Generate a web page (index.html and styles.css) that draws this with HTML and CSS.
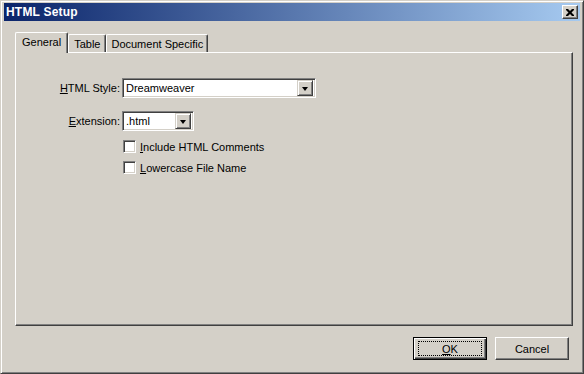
FILE: index.html
```html
<!DOCTYPE html>
<html lang="en">
<head>
    <meta charset="UTF-8">
    <title>HTML Setup</title>
    <link rel="stylesheet" href="styles.css">
</head>
<body>
    <div class="window">
        <div class="titlebar">
            <span class="title">HTML Setup</span>
            <span class="close-btn">
                <svg width="8" height="7" viewBox="0 0 8 7">
                    <path d="M0 0h2l2 2 2-2h2v1l-2.5 2.5L8 6v1H6L4 5 2 7H0V6l2.5-2.5L0 1z" fill="#000"/>
                </svg>
            </span>
        </div>

        <div class="tabs">
            <div class="tab active">General</div>
            <div class="tab">Table</div>
            <div class="tab tab-wide">Document Specific</div>
        </div>

        <div class="panel">
            <div class="form">
                <label class="label"><u>H</u>TML Style:</label>
                <div class="select select-style">
                    <span class="select-text">Dreamweaver</span>
                    <span class="arrow-btn"><span class="arrow"></span></span>
                </div>

                <label class="label"><u>E</u>xtension:</label>
                <div class="select select-ext">
                    <span class="select-text">.html</span>
                    <span class="arrow-btn"><span class="arrow"></span></span>
                </div>

                <span></span>
                <div class="checks">
                    <div class="check-row"><span class="checkbox"></span><span><u>I</u>nclude HTML Comments</span></div>
                    <div class="check-row"><span class="checkbox"></span><span><u>L</u>owercase File Name</span></div>
                </div>
            </div>
        </div>

        <div class="buttons">
            <div class="button default"><span class="focus"><u>O</u>K</span></div>
            <div class="button">Cancel</div>
        </div>
    </div>
</body>
</html>
```

FILE: styles.css
```css
body { margin: 0; font-family: "Liberation Sans", Arial, sans-serif; font-size: 11px; color: #000; }
u { text-decoration: underline; text-underline-offset: 1px; }

.window { width: 584px; height: 374px; box-sizing: border-box; background: #d4d0c8; border: 1px solid; border-color: #d4d0c8 #404040 #404040 #d4d0c8; box-shadow: inset 1px 1px #fff, inset -1px -1px #808080; padding: 2px 3px 3px 3px; display: flex; flex-direction: column; }

.titlebar { height: 18px; display: flex; align-items: center; justify-content: space-between; padding: 0 2px 0 2px; background: linear-gradient(to right, #0a246a, #a6caf0); }
.title { color: #fff; font-weight: bold; font-size: 12px; letter-spacing: 0.2px; }
.close-btn { width: 16px; height: 14px; box-sizing: border-box; background: #d4d0c8; border: 1px solid; border-color: #fff #404040 #404040 #fff; box-shadow: inset -1px -1px #808080; display: flex; align-items: center; justify-content: center; }

.tabs { display: flex; align-items: flex-end; height: 20px; margin: 11px 0 0 11px; position: relative; z-index: 1; }
.tab { height: 18px; box-sizing: border-box; padding: 0 5px; display: flex; align-items: center; border-left: 1px solid #fff; border-top: 1px solid #fff; border-right: 1px solid #404040; box-shadow: inset -1px 0 #808080; border-radius: 2px 2px 0 0; background: #d4d0c8; }
.tab.active { height: 21px; margin-bottom: -1px; padding: 0 6px 2px 6px; }
.tab-wide { padding: 0 4px; }

.panel { height: 274px; margin-left: 11px; width: 558px; box-sizing: border-box; border: 1px solid; border-color: #fff #404040 #404040 #fff; box-shadow: inset -1px -1px #808080; }

.form { display: grid; grid-template-columns: 106px auto; align-items: center; row-gap: 13px; padding-top: 25px; }
.label { text-align: right; padding-right: 2px; }

.select { height: 20px; box-sizing: border-box; background: #fff; border: 1px solid; border-color: #808080 #fff #fff #808080; box-shadow: inset 1px 1px #404040, inset -1px -1px #d4d0c8; display: flex; align-items: center; justify-content: space-between; padding: 2px; }
.select-style { width: 194px; }
.select-ext { width: 72px; }
.select-text { padding-left: 1px; }
.arrow-btn { width: 16px; height: 16px; box-sizing: border-box; background: #d4d0c8; border: 1px solid; border-color: #d4d0c8 #404040 #404040 #d4d0c8; box-shadow: inset 1px 1px #fff, inset -1px -1px #808080; display: flex; align-items: center; justify-content: center; }
.arrow { width: 0; height: 0; border-left: 3.5px solid transparent; border-right: 3.5px solid transparent; border-top: 4px solid #000; margin-top: 1px; }

.checks { display: flex; flex-direction: column; gap: 8px; margin-top: -4px; }
.check-row { display: flex; align-items: center; gap: 4px; height: 13px; }
.checkbox { width: 13px; height: 13px; box-sizing: border-box; background: #fff; border: 1px solid; border-color: #808080 #fff #fff #808080; box-shadow: inset 1px 1px #404040, inset -1px -1px #d4d0c8; margin-left: 1px; }

.buttons { display: flex; justify-content: flex-end; gap: 8px; margin-top: 11px; padding-right: 11px; }
.button { width: 74px; height: 23px; box-sizing: border-box; display: flex; align-items: center; justify-content: center; background: #d4d0c8; border: 1px solid; border-color: #fff #404040 #404040 #fff; box-shadow: inset -1px -1px #808080; }
.button.default { border: 1px solid #000; box-shadow: inset 1px 1px #fff, inset -1px -1px #404040, inset -2px -2px #808080; }
.focus { width: 64px; height: 15px; box-sizing: border-box; border: 1px dotted #000; display: flex; align-items: center; justify-content: center; }
```
